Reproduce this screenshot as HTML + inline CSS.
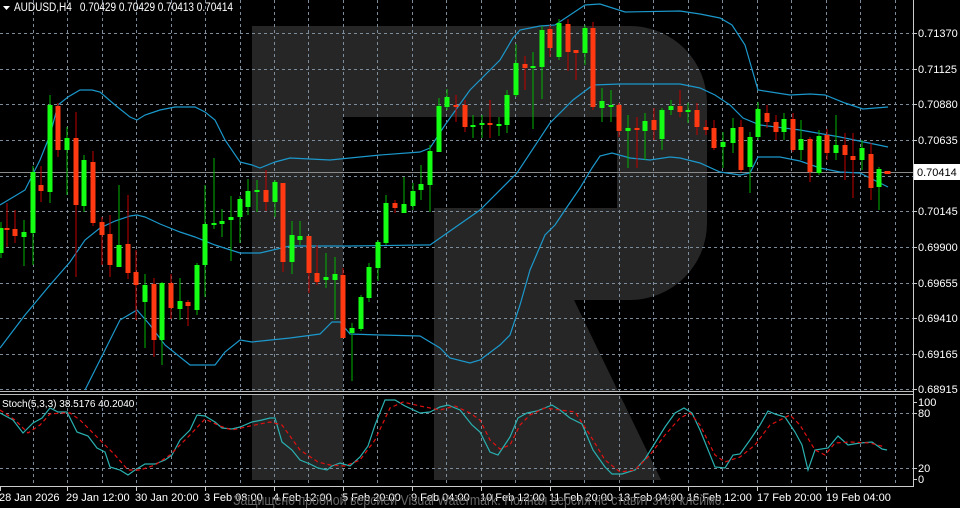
<!DOCTYPE html>
<html><head><meta charset="utf-8"><style>
html,body{margin:0;padding:0;background:#000;width:960px;height:508px;overflow:hidden}
svg{display:block}
text{font-family:"Liberation Sans","DejaVu Sans",sans-serif}
</style></head><body>
<svg width="960" height="508" viewBox="0 0 960 508" xmlns="http://www.w3.org/2000/svg">
<rect width="960" height="508" fill="#000"/>
<path d="M252,26 H630 A77,77 0 0 1 707,103 V223 A77,77 0 0 1 630,300 H574 L661,480 H434 V208 H617 V117 H343 V480 H252 Z" fill="#262626"/>
<g stroke="#7d8c9a" stroke-width="1" stroke-dasharray="3,3" fill="none">
<path d="M0,33.5H913M0,69.5H913M0,104.5H913M0,140.5H913M0,176.5H913M0,211.5H913M0,247.5H913M0,283.5H913M0,318.5H913M0,354.5H913M0,389.5H913M0,413.5H913M0,468.5H913"/>
<path d="M33.5,0V486M67.5,0V486M102.5,0V486M136.5,0V486M171.5,0V486M205.5,0V486M240.5,0V486M274.5,0V486M308.5,0V486M343.5,0V486M377.5,0V486M412.5,0V486M446.5,0V486M481.5,0V486M515.5,0V486M550.5,0V486M584.5,0V486M619.5,0V486M653.5,0V486M688.5,0V486M722.5,0V486M757.5,0V486M791.5,0V486M826.5,0V486M860.5,0V486M895.5,0V486"/>
</g>
<path d="M0,172.5H913" stroke="#8a8a8a" stroke-width="1"/>
<g stroke="#1b98cc" stroke-width="1.2" fill="none">
<polyline points="0,205 25,190 40,160 50,135 58,105 68,97 80,90 92,90 100,92 115,105 130,117 137,120 145,115 160,110 175,107 195,107 205,112 215,120 225,140 240,162 252,165 260,168 275,162 290,158 330,160 380,155 420,152 430,148 445,125 470,90 500,60 513,38 520,30 540,26 555,25 570,15 585,5 600,4 625,12 680,11 700,14 720,18 732,25 745,45 758,90 790,95 810,94 825,95 845,103 863,109 888,107"/>
<polyline points="0,348 25,315 50,285 70,262 85,240 100,228 115,221 130,216 137,215 145,217 160,224 180,232 195,237 215,245 240,253 260,253 290,246 350,246 423,245 430,245 480,210 517,173 550,123 573,100 593,85 620,84 680,84 700,88 715,95 730,105 743,118 760,125 800,130 840,137 888,147"/>
<polyline points="85,390 100,360 120,320 137,310 150,325 165,345 190,365 215,365 225,352 240,340 252,342 290,338 320,334 332,322 340,322 350,334 380,335 420,336 440,348 450,358 470,363 480,360 500,345 510,335 520,305 530,270 545,235 555,225 565,210 580,188 592,168 600,156 612,153 630,158 650,160 670,157 680,158 700,163 720,172 740,175 750,173 758,157 780,157 800,161 820,168 840,172 860,173 870,178 888,187"/>
</g>
<g stroke="#00b400" stroke-width="1">
<path d="M1,222V258M24,220V266M33,166V265M50,95V203M67,127V195M84,155V212M119,185V265M145,274V348M162,282V365M180,278V320M197,263V315M205,185V297M214,158V229M222,209V237M231,196V261M240,196V243M248,179V215M257,180V212M275,180V217M292,221V274M300,221V245M326,253V288M335,257V320M352,323V381M361,295V331M369,263V302M378,240V281M386,195V245M404,177V213M413,183V210M421,165V200M430,145V212M439,98V152M447,89V110M473,115V138M482,115V138M499,117V136M507,90V133M516,44V97M533,52V129M542,26V99M559,19V60M585,25V65M602,88V122M611,90V122M628,115V168M645,113V160M662,108V150M671,100V115M688,103V123M723,132V168M733,118V153M750,132V193M758,102V140M784,113V140M801,120V160M819,130V175M836,115V160M862,140V170M879,167V210"/>
</g>
<g fill="#14ff14">
<rect x="-1.5" y="228" width="5" height="25"/><rect x="21.5" y="232" width="5" height="5"/><rect x="30.5" y="172" width="5" height="61"/><rect x="47.5" y="105" width="5" height="87"/><rect x="64.5" y="138" width="5" height="12"/><rect x="81.5" y="160" width="5" height="46"/><rect x="116.5" y="245" width="5" height="22"/><rect x="142.5" y="285" width="5" height="17"/><rect x="159.5" y="283" width="5" height="57"/><rect x="177.5" y="301" width="5" height="8"/><rect x="194.5" y="265" width="5" height="45"/><rect x="202.5" y="224" width="5" height="41"/><rect x="211.5" y="223" width="5" height="2"/><rect x="219.5" y="221" width="5" height="3"/><rect x="228.5" y="217" width="5" height="3"/><rect x="237.5" y="199" width="5" height="18"/><rect x="245.5" y="191" width="5" height="16"/><rect x="254.5" y="190" width="5" height="2"/><rect x="272.5" y="182" width="5" height="20"/><rect x="289.5" y="235" width="5" height="27"/><rect x="297.5" y="236" width="5" height="4"/><rect x="323.5" y="277" width="5" height="3"/><rect x="332.5" y="274" width="5" height="6"/><rect x="349.5" y="328" width="5" height="5"/><rect x="358.5" y="297" width="5" height="32"/><rect x="366.5" y="267" width="5" height="31"/><rect x="375.5" y="242" width="5" height="26"/><rect x="383.5" y="203" width="5" height="40"/><rect x="401.5" y="204" width="5" height="9"/><rect x="410.5" y="191" width="5" height="15"/><rect x="418.5" y="184" width="5" height="6"/><rect x="427.5" y="151" width="5" height="34"/><rect x="436.5" y="106" width="5" height="46"/><rect x="444.5" y="97" width="5" height="10"/><rect x="470.5" y="125" width="5" height="2"/><rect x="479.5" y="123" width="5" height="2"/><rect x="496.5" y="124" width="5" height="2"/><rect x="504.5" y="95" width="5" height="30"/><rect x="513.5" y="63" width="5" height="32"/><rect x="530.5" y="66" width="5" height="2"/><rect x="539.5" y="30" width="5" height="37"/><rect x="556.5" y="23" width="5" height="34"/><rect x="582.5" y="28" width="5" height="25"/><rect x="599.5" y="101" width="5" height="7"/><rect x="608.5" y="105" width="5" height="2"/><rect x="625.5" y="128" width="5" height="3"/><rect x="642.5" y="121" width="5" height="10"/><rect x="659.5" y="110" width="5" height="29"/><rect x="668.5" y="106" width="5" height="4"/><rect x="685.5" y="110" width="5" height="2"/><rect x="720.5" y="142" width="5" height="5"/><rect x="730.5" y="128" width="5" height="15"/><rect x="747.5" y="137" width="5" height="30"/><rect x="755.5" y="109" width="5" height="28"/><rect x="781.5" y="119" width="5" height="13"/><rect x="798.5" y="139" width="5" height="11"/><rect x="816.5" y="136" width="5" height="37"/><rect x="833.5" y="145" width="5" height="8"/><rect x="859.5" y="148" width="5" height="12"/><rect x="876.5" y="169" width="5" height="18"/>
</g>
<g stroke="#c40000" stroke-width="1">
<path d="M7,203V247M15,210V243M41,166V202M58,103V157M76,112V277M93,151V226M102,217V265M110,215V277M128,195V279M136,250V320M154,278V357M171,274V319M188,300V326M266,170V211M283,183V272M309,236V293M317,245V285M343,268V338M395,200V213M456,95V122M465,100V132M490,100V138M525,56V90M550,25V57M568,19V71M576,50V80M593,22V110M619,103V137M637,117V168M654,108V140M680,90V117M697,103V135M706,120V135M714,120V150M741,120V172M767,105V128M776,115V140M793,113V152M810,137V182M827,129V160M845,133V180M853,133V198M871,143V200"/>
</g>
<g fill="#ff3a12">
<rect x="4.5" y="228" width="5" height="2"/><rect x="12.5" y="229" width="5" height="7"/><rect x="38.5" y="185" width="5" height="6"/><rect x="55.5" y="106" width="5" height="44"/><rect x="73.5" y="138" width="5" height="67"/><rect x="90.5" y="162" width="5" height="61"/><rect x="99.5" y="222" width="5" height="13"/><rect x="107.5" y="234" width="5" height="31"/><rect x="125.5" y="244" width="5" height="29"/><rect x="133.5" y="272" width="5" height="13"/><rect x="151.5" y="284" width="5" height="56"/><rect x="168.5" y="283" width="5" height="25"/><rect x="185.5" y="302" width="5" height="4"/><rect x="263.5" y="190" width="5" height="12"/><rect x="280.5" y="183" width="5" height="79"/><rect x="306.5" y="236" width="5" height="37"/><rect x="314.5" y="273" width="5" height="9"/><rect x="340.5" y="275" width="5" height="63"/><rect x="392.5" y="203" width="5" height="5"/><rect x="453.5" y="105" width="5" height="2"/><rect x="462.5" y="105" width="5" height="22"/><rect x="487.5" y="123" width="5" height="2"/><rect x="522.5" y="64" width="5" height="4"/><rect x="547.5" y="29" width="5" height="19"/><rect x="565.5" y="24" width="5" height="28"/><rect x="573.5" y="50" width="5" height="3"/><rect x="590.5" y="28" width="5" height="79"/><rect x="616.5" y="105" width="5" height="26"/><rect x="634.5" y="128" width="5" height="2"/><rect x="651.5" y="120" width="5" height="10"/><rect x="677.5" y="106" width="5" height="6"/><rect x="694.5" y="110" width="5" height="17"/><rect x="703.5" y="127" width="5" height="3"/><rect x="711.5" y="128" width="5" height="20"/><rect x="738.5" y="127" width="5" height="43"/><rect x="764.5" y="113" width="5" height="9"/><rect x="773.5" y="122" width="5" height="10"/><rect x="790.5" y="119" width="5" height="31"/><rect x="807.5" y="139" width="5" height="33"/><rect x="824.5" y="135" width="5" height="18"/><rect x="842.5" y="145" width="5" height="10"/><rect x="850.5" y="156" width="5" height="4"/><rect x="868.5" y="154" width="5" height="34"/><rect x="884.5" y="171" width="6" height="3"/>
</g>
<rect x="0" y="391" width="913" height="1" fill="#bbb"/>
<rect x="0" y="394" width="913" height="1" fill="#bbb"/>
<rect x="0" y="392" width="913" height="2" fill="#000"/>
<polyline fill="none" stroke="#2ab0b0" stroke-width="1.2" points="0,413 13,420 23,433 33,423 42,418 50,408 58,412 67,412 77,432 88,436 97,448 105,452 110,467 120,470 128,475 135,470 145,464 155,464 165,460 172,455 180,440 190,430 197,415 205,416 215,422 222,428 232,429 240,427 252,422 262,420 270,418 275,418 282,442 292,450 300,460 310,464 318,468 327,470 332,466 340,463 350,466 360,457 368,446 375,425 385,400 395,400 405,406 420,413 430,412 440,407 448,405 460,410 472,425 480,432 490,452 498,455 510,437 518,418 527,413 537,411 552,405 560,410 570,418 582,424 593,450 605,467 612,474 622,474 635,470 645,459 655,443 665,427 675,413 684,408 692,413 700,430 715,467 725,468 733,455 740,454 750,440 760,425 768,411 775,414 785,417 795,432 802,445 808,470 815,450 828,448 838,436 848,445 860,443 872,442 882,449 887,450"/>
<polyline fill="none" stroke="#e01010" stroke-width="1.2" stroke-dasharray="4,3" points="0,410 15,420 28,433 40,425 50,414 62,413 70,413 80,420 100,440 115,455 128,470 140,470 155,465 170,455 190,435 205,419 220,426 232,430 250,426 270,422 282,425 300,450 318,462 330,465 345,466 360,460 375,440 390,408 403,402 420,406 440,410 455,406 470,413 480,420 490,440 500,449 510,445 520,425 530,415 545,408 560,410 575,412 590,435 605,460 620,472 635,470 650,455 665,435 680,418 690,413 700,425 715,455 725,462 740,457 755,445 770,425 790,415 800,425 815,450 825,455 835,443 850,442 870,443 885,447"/>
<rect x="0" y="486" width="914" height="1" fill="#ccc"/>
<rect x="913" y="0" width="1" height="487" fill="#ccc"/>
<g stroke="#ccc"><path d="M0.5,486V491M67.5,486V491M136.5,486V491M205.5,486V491M274.5,486V491M343.5,486V491M412.5,486V491M481.5,486V491M550.5,486V491M619.5,486V491M688.5,486V491M757.5,486V491M826.5,486V491M913,33.5H917M913,69.5H917M913,104.5H917M913,140.5H917M913,211.5H917M913,247.5H917M913,283.5H917M913,318.5H917M913,354.5H917M913,389.5H917M913,402.5H917M913,413.5H917M913,468.5H917M913,479.5H917"/></g>
<g fill="#fff" font-size="11">
<text x="918" y="37">0.71370</text><text x="918" y="73">0.71125</text><text x="918" y="108">0.70880</text><text x="918" y="144">0.70635</text><text x="918" y="215">0.70145</text><text x="918" y="251">0.69900</text><text x="918" y="287">0.69655</text><text x="918" y="322">0.69410</text><text x="918" y="358">0.69165</text><text x="918" y="393">0.68915</text>
<text x="918" y="406">100</text><text x="918" y="417">80</text><text x="918" y="472">20</text><text x="918" y="483">0</text>
</g>
<rect x="914" y="164" width="46" height="16" fill="#fff"/>
<text x="917" y="176" font-size="11" fill="#000">0.70414</text>
<g fill="#fff" font-size="11">
<text x="-1" y="501">28 Jan 2026</text><text x="66" y="501">29 Jan 12:00</text><text x="135" y="501">30 Jan 20:00</text><text x="204" y="501">3 Feb 08:00</text><text x="273" y="501">4 Feb 12:00</text><text x="342" y="501">5 Feb 20:00</text><text x="411" y="501">9 Feb 04:00</text><text x="480" y="501">10 Feb 12:00</text><text x="549" y="501">11 Feb 20:00</text><text x="618" y="501">13 Feb 04:00</text><text x="687" y="501">16 Feb 12:00</text><text x="757" y="501">17 Feb 20:00</text><text x="826" y="501">19 Feb 04:00</text>
</g>
<text x="233" y="505" font-size="14.5" fill="#666" textLength="492" lengthAdjust="spacingAndGlyphs">Защищено пробной версией Visual Watermark. Полная версия не ставит этот клеймо.</text>
<path d="M3,6H10L6.5,10Z" fill="#fff"/>
<text x="14" y="11" font-size="11.5" fill="#fff" textLength="219" lengthAdjust="spacingAndGlyphs">AUDUSD,H4 <tspan dx="6">0.70429 0.70429 0.70413 0.70414</tspan></text>
<text x="2" y="407" font-size="10" fill="#fff">Stoch(5,3,3) 38.5176 40.2040</text>
</svg>
</body></html>
